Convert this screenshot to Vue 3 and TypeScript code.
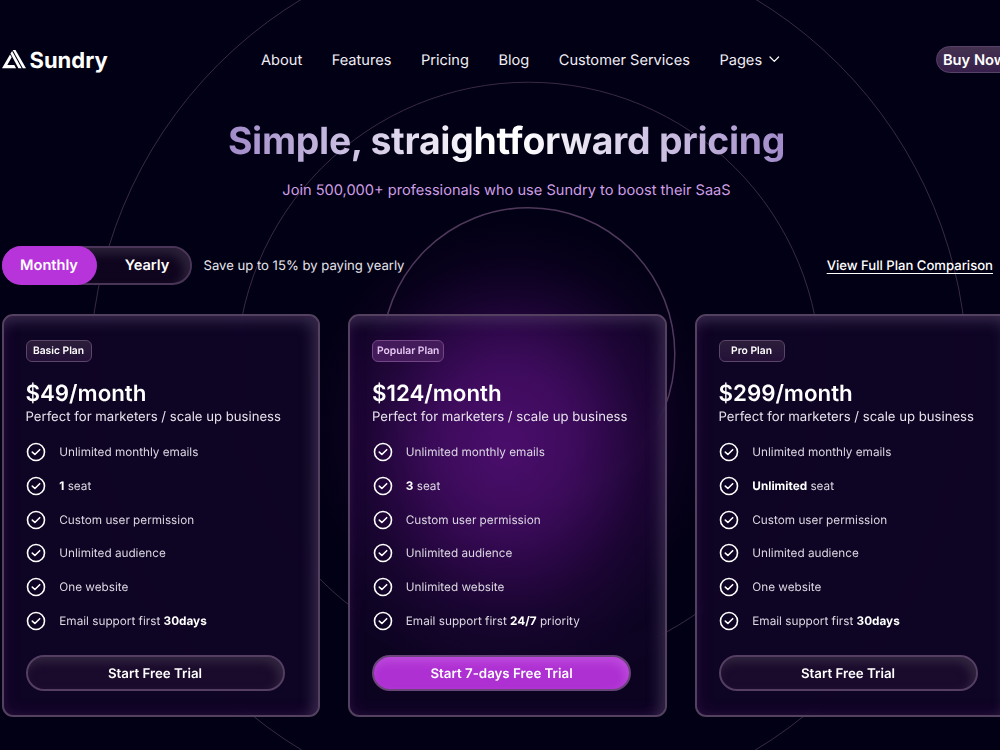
<script setup lang="ts">
import { ref } from 'vue'

interface Feature {
  text: string
  before?: string
  strong?: string
}

interface Plan {
  name: string
  price: string
  action: string
  popular?: boolean
  features: Feature[]
}

const links = ['About', 'Features', 'Pricing', 'Blog', 'Customer Services']

const plans: Plan[] = [
  {
    name: 'Basic Plan',
    price: '$49/month',
    action: 'Start Free Trial',
    features: [
      { text: 'Unlimited monthly emails' },
      { strong: '1', text: ' seat' },
      { text: 'Custom user permission' },
      { text: 'Unlimited audience' },
      { text: 'One website' },
      { before: 'Email support first ', strong: '30days', text: '' },
    ],
  },
  {
    name: 'Popular Plan',
    price: '$124/month',
    action: 'Start 7-days Free Trial',
    popular: true,
    features: [
      { text: 'Unlimited monthly emails' },
      { strong: '3', text: ' seat' },
      { text: 'Custom user permission' },
      { text: 'Unlimited audience' },
      { text: 'Unlimited website' },
      { before: 'Email support first ', strong: '24/7', text: ' priority' },
    ],
  },
  {
    name: 'Pro Plan',
    price: '$299/month',
    action: 'Start Free Trial',
    features: [
      { text: 'Unlimited monthly emails' },
      { strong: 'Unlimited', text: ' seat' },
      { text: 'Custom user permission' },
      { text: 'Unlimited audience' },
      { text: 'One website' },
      { before: 'Email support first ', strong: '30days', text: '' },
    ],
  },
]

const billing = ref<'monthly' | 'yearly'>('monthly')
</script>

<template>
  <div class="page">
    <svg class="page__rings" width="1000" height="750" fill="none" aria-hidden="true">
      <defs>
        <radialGradient id="glow">
          <stop offset="0" stop-color="#5c1180" stop-opacity="0.88" />
          <stop offset="0.3" stop-color="#541078" stop-opacity="0.74" />
          <stop offset="0.55" stop-color="#460b68" stop-opacity="0.38" />
          <stop offset="0.8" stop-color="#340850" stop-opacity="0.13" />
          <stop offset="1" stop-color="#240540" stop-opacity="0" />
        </radialGradient>
      </defs>
      <ellipse cx="512" cy="428" rx="210" ry="215" fill="url(#glow)" />
      <circle cx="528.5" cy="374.6" r="438.7" stroke="#392a43" />
      <circle cx="528.5" cy="374.4" r="292.2" stroke="#392a43" />
      <circle cx="528.5" cy="354" r="146.3" stroke="#4f385b" stroke-width="1.5" />
    </svg>

    <div class="page__inner">
      <header class="header">
        <a class="logo">
          <svg width="24" height="19" viewBox="0 0 24 19" fill="#fff" aria-hidden="true">
            <path d="M8 4.4 9.7 7.3 5.3 15.1H12.3L14.1 18.2H0Z" />
            <path d="M8.5 3.6 10.1 0.9 19.6 18.2H16.4Z" />
            <path d="M10.7 0H13.5L24 18.2H20.8Z" />
          </svg>
          <span>Sundry</span>
        </a>
        <nav class="nav">
          <a v-for="link in links" :key="link">{{ link }}</a>
          <a class="nav__pages">
            Pages
            <svg width="11" height="7" viewBox="0 0 11 7" fill="none" stroke="#fff" stroke-width="1.2" aria-hidden="true">
              <path d="M1 1 5.3 5.4 9.6 1" stroke-linecap="round" stroke-linejoin="round" />
            </svg>
          </a>
        </nav>
        <button class="buy" type="button">Buy Now</button>
      </header>

      <section class="hero">
        <h1>Simple, straightforward pricing</h1>
        <p>Join 500,000+ professionals who use Sundry to boost their SaaS</p>
      </section>

      <div class="billing">
        <div class="switch">
          <button
            type="button"
            class="switch__item"
            :class="{ 'switch__item--active': billing === 'monthly' }"
            @click="billing = 'monthly'"
          >
            Monthly
          </button>
          <button
            type="button"
            class="switch__item"
            :class="{ 'switch__item--active': billing === 'yearly' }"
            @click="billing = 'yearly'"
          >
            Yearly
          </button>
        </div>
        <span class="billing__note">Save up to 15% by paying yearly</span>
        <a class="billing__link">View Full Plan Comparison</a>
      </div>

      <div class="plans">
        <article v-for="plan in plans" :key="plan.name" class="plan" :class="{ 'plan--popular': plan.popular }">
          <span class="plan__badge">{{ plan.name }}</span>
          <h2>{{ plan.price }}</h2>
          <p class="plan__lead">Perfect for marketers / scale up business</p>
          <ul>
            <li v-for="(feature, index) in plan.features" :key="index">
              <svg width="20" height="20" viewBox="0 0 20 20" fill="none" stroke="#fff" aria-hidden="true">
                <circle cx="10" cy="10" r="8.5" stroke-width="1.6" />
                <path d="M6.3 10.1 8.9 12.5 13.7 7.7" stroke-width="1.6" stroke-linecap="round" stroke-linejoin="round" />
              </svg>
              <span>{{ feature.before }}<b v-if="feature.strong">{{ feature.strong }}</b>{{ feature.text }}</span>
            </li>
          </ul>
          <button type="button" class="plan__action">{{ plan.action }}</button>
        </article>
      </div>
    </div>
  </div>
</template>

<style>
body {
  background: #020014;
}
</style>

<style scoped>
.page {
  position: relative;
  width: 1000px;
  height: 750px;
  overflow: hidden;
  background: #020014;
  color: #fff;
  font-family: Inter, 'Liberation Sans', sans-serif;
  text-rendering: geometricPrecision;
}

.page__rings {
  position: absolute;
  inset: 0;
}

.page__inner {
  position: relative;
  width: 1012px;
  padding-left: 1.5px;
}

button {
  margin: 0;
  padding: 0;
  color: #fff;
  font-family: inherit;
  text-rendering: inherit;
  cursor: pointer;
}

.header {
  display: flex;
  align-items: center;
  height: 30px;
  padding-top: 44.5px;
}

.logo {
  display: flex;
  align-items: center;
  gap: 4px;
  width: 259.5px;
  padding-top: 2px;
  font-size: 22px;
  font-weight: 700;
}

.logo svg {
  margin-top: -2px;
}

.nav {
  display: flex;
  gap: 29.5px;
  color: #f1eff5;
  font-size: 14.6px;
  white-space: nowrap;
}

.nav__pages {
  display: flex;
  align-items: center;
  gap: 7px;
}

.buy {
  width: 78px;
  height: 27px;
  margin-left: auto;
  border: 1.5px solid #59426a;
  border-radius: 14px;
  background: linear-gradient(#443250, #37204c);
  font-size: 14.7px;
  font-weight: 600;
  white-space: nowrap;
}

.hero {
  display: flex;
  flex-direction: column;
  align-items: center;
  width: 1010px;
  padding-top: 42.5px;
}

.hero h1 {
  margin: 0;
  background: linear-gradient(90deg, #a18bc9 0%, #fff 47%, #fff 52%, #a18bc9 100%);
  background-clip: text;
  color: transparent;
  font-size: 37.4px;
  font-weight: 650;
  letter-spacing: -0.3px;
  line-height: 49px;
}

.hero p {
  margin: 13px 0 0;
  color: #cf9fe6;
  font-size: 14.6px;
  line-height: 22px;
}

.billing {
  display: flex;
  align-items: center;
  height: 40px;
  margin-top: 44px;
}

.switch {
  display: flex;
  box-sizing: border-box;
  width: 190px;
  height: 39px;
  border: 2px solid #4a3558;
  border-radius: 20px;
  background: #10051f;
  box-shadow: inset -6px 6px 10px #2a2138;
}

.switch__item {
  width: 95px;
  height: 39px;
  margin: -2px 0 0 -2px;
  border: 0;
  border-radius: 20px;
  background: transparent;
  font-size: 14.6px;
  font-weight: 600;
}

.switch__item + .switch__item {
  padding-left: 10px;
}

.switch__item--active {
  background: #b634da;
}

.billing__note {
  margin-left: 12px;
  padding-top: 2px;
  color: #e7e5ec;
  font-size: 13.1px;
}

.billing__link {
  margin: 0 20.5px 0 auto;
  padding-top: 2px;
  font-size: 13.1px;
  font-weight: 500;
  text-decoration: underline;
  text-underline-offset: 3px;
}

.plans {
  display: grid;
  grid-template-columns: repeat(3, 318.5px);
  gap: 28px;
  margin-top: 28.5px;
}

.plan {
  box-sizing: border-box;
  height: 403px;
  padding: 24px 22px;
  border: 2px solid #54405f;
  border-radius: 11px;
  background: rgba(19, 5, 42, 0.72);
  box-shadow:
    inset -6px 6px 13px rgba(110, 100, 130, 0.36),
    inset 3px -3px 14px rgba(80, 20, 110, 0.22);
  backdrop-filter: blur(8px);
}

/* The glow behind the page shines through the highlighted plan */
.plan--popular {
  background:
    radial-gradient(
      ellipse 200px 235px at 155px 135px,
      rgba(98, 18, 136, 0.58),
      rgba(90, 16, 126, 0.48) 35%,
      rgba(62, 11, 92, 0.24) 70%,
      rgba(40, 6, 64, 0)
    ),
    rgba(19, 5, 42, 0.62);
}

.plan__badge {
  display: flex;
  align-items: center;
  justify-content: center;
  box-sizing: border-box;
  width: fit-content;
  min-width: 66px;
  height: 22px;
  padding: 1px 4px 0;
  border: 1px solid #5b4568;
  border-radius: 6px;
  background: linear-gradient(#2b1d3a, #241038);
  font-size: 10.3px;
  font-weight: 600;
}

.plan--popular .plan__badge {
  border-color: #734587;
  background: #431a5a;
  color: #e5c8f2;
}

.plan h2 {
  margin: 18.5px 0 0;
  font-size: 22.3px;
  font-weight: 600;
  line-height: 28px;
}

.plan__lead {
  margin: 0;
  color: #e7e3ec;
  font-size: 13.15px;
  line-height: 18px;
}

.plan ul {
  display: grid;
  grid-auto-rows: 33.7px;
  margin: 9.3px 0 0;
  padding: 0;
  list-style: none;
}

.plan li {
  display: flex;
  align-items: center;
  gap: 12.9px;
  color: #dcd8e3;
  font-size: 11.75px;
}

.plan li svg {
  margin-left: 0.9px;
}

.plan b {
  color: #fff;
  font-weight: 700;
}

.plan__action {
  box-sizing: border-box;
  width: 259px;
  height: 36px;
  margin-top: 17.2px;
  padding-top: 2px;
  border: 2px solid #543e62;
  border-radius: 18px;
  background: #1a0a2c;
  box-shadow: inset -4px 5px 10px #31263f;
  font-size: 13.3px;
  font-weight: 600;
}

.plan--popular .plan__action {
  border-color: #694579;
  background: #ae30d2;
  box-shadow: inset -3px 5px 10px #be4bdd;
}
</style>
